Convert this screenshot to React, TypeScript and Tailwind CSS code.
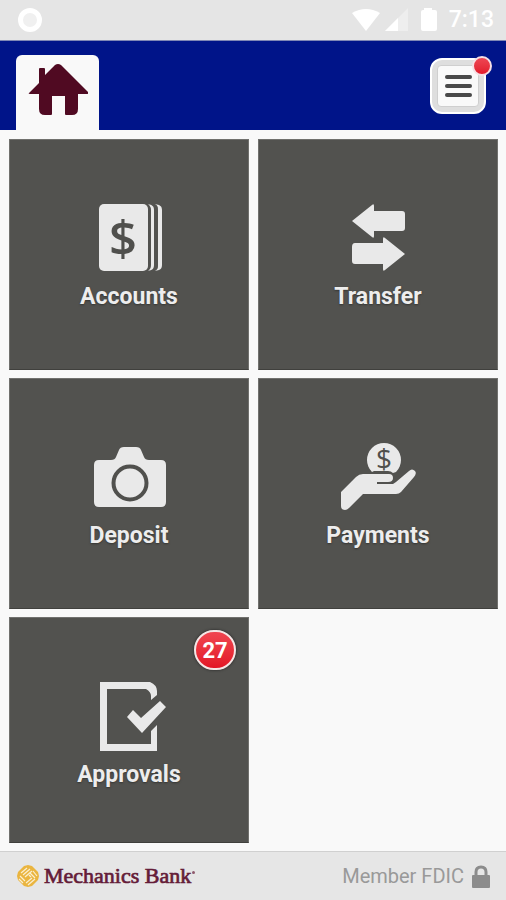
import type { ReactNode } from "react";

function Icon({ children }: { children: ReactNode }) {
  return (
    <svg aria-hidden="true" viewBox="0 0 80 72" className="h-[72px] w-20 shrink-0 fill-[#e9e9e9]">
      {children}
    </svg>
  );
}

const accountsIcon = (
  <Icon>
    <rect x="10" y="3" width="49" height="67" rx="5" />
    <path d="M59 3C63 4 65 5 65 9V64C65 68 63 69 59 70C61 68 62 67 62 64V9C62 6 61 5 59 3Z" />
    <path d="M66 3C71 4 73 5 73 9V64C73 68 71 69 66 70C69 68 69 67 69 64V9C69 6 69 5 66 3Z" />
    <text x="34" y="55" textAnchor="middle" className="fill-[#50504d] font-['Open_Sans',sans-serif] text-[49px] font-semibold">
      $
    </text>
  </Icon>
);

const transferIcon = (
  <Icon>
    <path d="M14 20L34 4Q36 2 36 5V10H64Q67 10 67 13V27Q67 30 64 30H36V35Q36 38 34 36Z" />
    <path d="M67 53L47 69Q45 71 45 68V63H17Q14 63 14 60V46Q14 42 17 42H45V38Q45 35 47 37Z" />
  </Icon>
);

const depositIcon = (
  <Icon>
    <path d="M10 20H22Q26 20 27 17L30 10Q31 7 35 7H47Q51 7 52 10L55 17Q56 20 60 20H72Q77 20 77 25V62Q77 67 72 67H10Q5 67 5 62V25Q5 20 10 20Z" />
    <circle cx="41" cy="43" r="16.5" className="fill-none stroke-[#50504d] stroke-4" />
  </Icon>
);

const paymentsIcon = (
  <Icon>
    <path d="M34 32A17 17 0 1 1 58 32L55 33Q53 31 50 31H36Z" />
    <text x="46" y="29" textAnchor="middle" className="fill-[#50504d] font-['Open_Sans',sans-serif] text-[28px]">
      $
    </text>
    <path d="M3 52L18 37Q21 34 25 34H51Q55 34 55 38Q55 42 50 42H39V44H55L58 42L71 31Q74 28 77 31Q79 33 76 37L63 52Q61 54 58 54H25L11 68Q9 70 7 70Q3 70 3 66Z" />
  </Icon>
);

const approvalsIcon = (
  <Icon>
    <path d="M11 3H61Q68 6 68 12V16L62 21V17Q62 13 57 10H18V65H62V52L68 46V72H11Z" />
    <path d="M38 38L44 31L52 39L71 22L77 28L53 54Z" />
  </Icon>
);

const tiles = [
  { label: "Accounts", icon: accountsIcon, count: 0 },
  { label: "Transfer", icon: transferIcon, count: 0 },
  { label: "Deposit", icon: depositIcon, count: 0 },
  { label: "Payments", icon: paymentsIcon, count: 0 },
  { label: "Approvals", icon: approvalsIcon, count: 27 },
];

function StatusBar() {
  return (
    <div className="flex h-10 items-center justify-between bg-[#e5e5e5] pr-3 pl-[18px] text-white">
      <span className="size-6 rounded-full border-[5px] border-white bg-[#f0f0f0]" />
      <div className="flex items-center">
        <svg aria-hidden="true" viewBox="0 0 88 24" className="mr-3 h-6 w-[88px] fill-white">
          <path d="M3 5Q17-3 31 5L17 23Z" />
          <path d="M36 23L59 0V23Z" className="fill-[#eeeeee]" />
          <path d="M36 23L49 10V23Z" />
          <path d="M75 0H83V2H86Q88 2 88 4V21Q88 23 86 23H74Q72 23 72 21V4Q72 2 74 2H75Z" />
        </svg>
        <span className="text-[23px] leading-6 font-medium">7:13</span>
      </div>
    </div>
  );
}

function Header() {
  return (
    <header className="flex h-[90px] items-end justify-between border-t border-[#8088b5] bg-[#001489] pr-5 pl-4">
      <button aria-label="Home" className="flex h-[75px] w-[83px] justify-center rounded-t-md bg-[#f9f9f9] pt-2">
        <svg aria-hidden="true" viewBox="0 0 60 54" className="h-[54px] w-[60px] fill-[#500a22]">
          <path d="M1 30L11 20V6Q11 5 12 5H16Q17 5 17 6V12L27 2Q30 0 33 2L60 29Q61 31 59 31H50V46Q50 52 44 52H38Q37 52 37 51V33H24V51Q24 52 23 52H17Q11 52 11 46V31H2Q0 31 1 30Z" />
        </svg>
      </button>
      <button aria-label="Menu" className="relative mb-4 flex size-14 items-center justify-center rounded-xl border-2 border-white bg-[#dedede]">
        <span className="flex size-[42px] flex-col items-center justify-center gap-[5px] rounded-sm border border-[#cfcfcf] bg-[#f9f9f9]">
          <span className="h-1 w-[27px] rounded-full bg-[#494949]" />
          <span className="h-1 w-[27px] rounded-full bg-[#494949]" />
          <span className="h-1 w-[27px] rounded-full bg-[#494949]" />
        </span>
        <span className="absolute -top-1 -right-2 size-5 rounded-full border-2 border-[#f5dfe4] bg-linear-to-b from-[#ee4553] to-[#e2182b]" />
      </button>
    </header>
  );
}

function Logo() {
  return (
    <div className="flex items-center gap-1">
      <svg aria-hidden="true" viewBox="0 0 24 24" className="size-6">
        <path d="M12 1L16 2L22 8L23 12L22 16L16 22L12 23L8 22L2 16L1 12L2 8L8 2Z" className="fill-[#eab540]" />
        <path
          d="M5 9L11 4M7 11L14 5M9 13L16 7M14 9L19 14M17 7L21 12M4 12L9 17M3 15L7 19M10 19L16 14M12 21L19 15M13 11L15 13"
          className="fill-none stroke-[#fbefd0] stroke-[1.2]"
        />
      </svg>
      <span className="flex items-center font-['Liberation_Serif',serif] text-[22px] leading-6 text-[#641c38] [-webkit-text-stroke:0.7px_#641c38]">
        Mechanics Bank
        <span className="mb-2 ml-px size-[3px] rounded-full bg-[#8f5a6c]" />
      </span>
    </div>
  );
}

export default function App() {
  return (
    <div className="flex min-h-screen flex-col bg-[#f9f9f9] font-[Roboto,sans-serif]">
      <StatusBar />
      <Header />
      <main className="grid flex-1 grid-cols-2 grid-rows-[231px_231px_1fr] gap-x-[9px] gap-y-2 pt-[9px] pr-2 pb-2 pl-[9px]">
        {tiles.map((tile) => (
          <button
            key={tile.label}
            className="relative flex flex-col items-center justify-start border border-[#71716e] border-b-[#40403d] bg-[#52524f] pt-[61px]"
          >
            {tile.icon}
            <span className="mt-2 text-[23px] leading-8 font-bold text-[#ededed] [text-shadow:0_1px_2px_#353532]">
              {tile.label}
            </span>
            {tile.count > 0 && (
              <span className="absolute top-3 right-3 flex h-10 w-[42px] items-center justify-center rounded-full border-2 border-[#f5e5e5] bg-linear-to-b from-[#f04450] to-[#e31324] text-[22px] font-bold text-white shadow-[0_0_3px_#222222]">
                {tile.count}
              </span>
            )}
          </button>
        ))}
      </main>
      <footer className="flex h-[49px] items-center justify-between border-t border-[#d0d0d0] bg-[#e6e6e6] px-4">
        <Logo />
        <div className="flex items-center gap-2 text-xl text-[#999999]">
          Member FDIC
          <svg aria-hidden="true" viewBox="0 0 18 23" className="h-[23px] w-[18px]">
            <path d="M4 11V7Q4 2 9 2T14 7V11" className="fill-none stroke-[#8c8c8c] stroke-3" />
            <rect y="10" width="18" height="13" rx="1" className="fill-[#8c8c8c]" />
          </svg>
        </div>
      </footer>
    </div>
  );
}
